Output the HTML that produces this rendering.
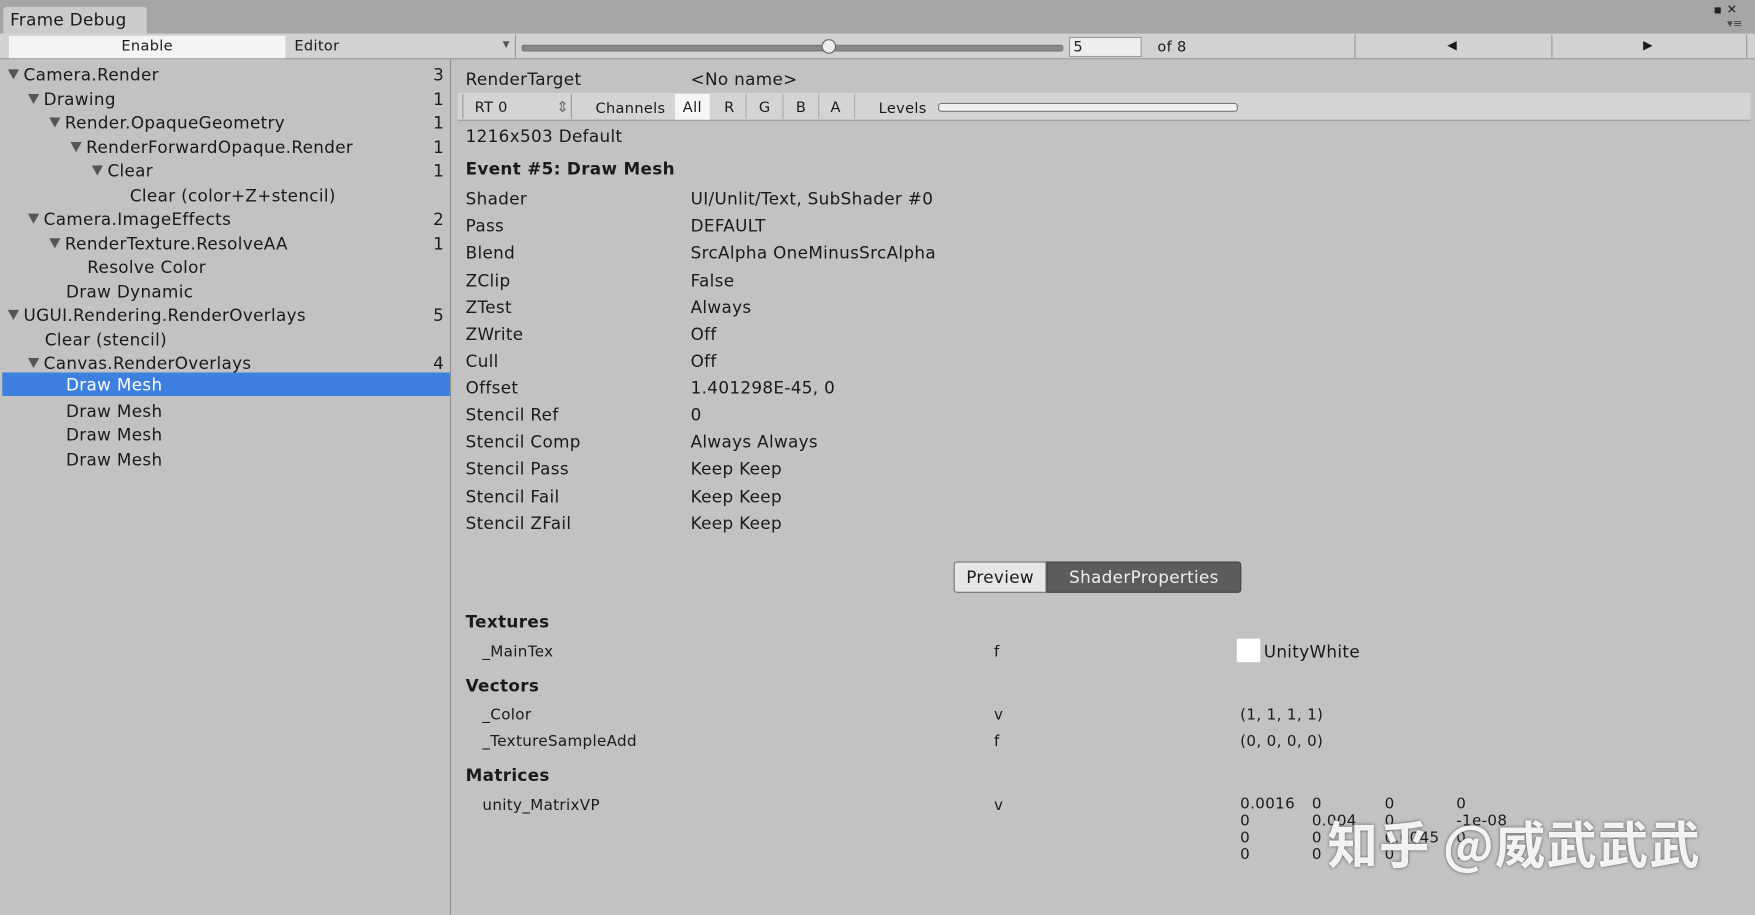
<!DOCTYPE html>
<html><head><meta charset="utf-8"><style>
html,body{margin:0;padding:0;width:1755px;height:915px;overflow:hidden;background:#c2c2c2}
#s{position:absolute;left:0;top:0;width:1568px;height:818px;transform:scale(1.1193,1.1186);transform-origin:0 0;background:#c2c2c2;font-family:"DejaVu Sans","Liberation Sans",sans-serif;font-size:15px;letter-spacing:0.3px;color:#1a1a1a}
.a{position:absolute;white-space:nowrap}
.t{position:absolute;white-space:nowrap;line-height:21px;height:21px;margin-top:2px}
.tri{display:inline-block;width:0;height:0;border-left:5px solid transparent;border-right:5px solid transparent;border-top:9px solid #555;margin-right:4px;vertical-align:1px}
.sm{font-size:13.5px}
</style></head><body><div id="s">
<div class="a" style="left:0;top:0;width:1568px;height:30px;background:#a5a5a5"></div>
<div class="a" style="left:3px;top:6px;width:128px;height:24px;background:#cbcbcb;border-radius:3px 3px 0 0;font-size:15px;line-height:24px;padding-left:6px;box-sizing:border-box">Frame Debug</div>
<div class="a" style="left:1531px;top:2px;font-size:11px;color:#222">▪ ✕</div>
<div class="a" style="left:1543px;top:16px;font-size:10px;color:#444">▾≡</div>
<div class="a" style="left:0;top:30px;width:1568px;height:22px;background:#d2d2d2;border-bottom:1px solid #999"></div>
<div class="a" style="left:8px;top:31px;width:247px;height:20px;background:#f4f4f4;text-align:center;font-size:13px;line-height:20px;margin-top:1px">Enable</div>
<div class="a" style="left:263px;top:32px;font-size:13px;line-height:20px">Editor</div>
<div class="a" style="left:449px;top:31px;font-size:8px;line-height:18px;color:#555">▼</div>
<div class="a" style="left:460px;top:31px;width:1px;height:21px;background:#999"></div>
<div class="a" style="left:466px;top:40px;width:482px;height:4px;background:#888;border-radius:2px;border:1px solid #777"></div>
<div class="a" style="left:734px;top:35px;width:11px;height:11px;border-radius:50%;background:#eee;border:1px solid #666"></div>
<div class="a" style="left:955px;top:32px;width:65px;height:18px;background:#eee;border:1px solid #999;font-size:13px;line-height:18px;padding-left:3px;box-sizing:border-box;margin-top:1px">5</div>
<div class="a" style="left:1034px;top:33px;font-size:13px;line-height:20px">of 8</div>
<div class="a" style="left:1210px;top:31px;width:1px;height:21px;background:#999"></div>
<div class="a" style="left:1386px;top:31px;width:1px;height:21px;background:#999"></div>
<div class="a" style="left:1560px;top:31px;width:1px;height:21px;background:#999"></div>
<div class="a" style="left:1293px;top:34px;font-size:11px">◀</div>
<div class="a" style="left:1468px;top:34px;font-size:11px">▶</div>
<div class="a" style="left:402px;top:53px;width:1px;height:765px;background:#8f8f8f"></div>
<div class="a" style="left:2px;top:333px;width:400px;height:21px;background:#3d80df"></div>
<div class="t" style="left:7px;top:55px"><span class="tri"></span>Camera.Render</div>
<div class="t" style="left:25px;top:77px"><span class="tri"></span>Drawing</div>
<div class="t" style="left:44px;top:98px"><span class="tri"></span>Render.OpaqueGeometry</div>
<div class="t" style="left:63px;top:120px"><span class="tri"></span>RenderForwardOpaque.Render</div>
<div class="t" style="left:82px;top:141px"><span class="tri"></span>Clear</div>
<div class="t" style="left:116px;top:163px">Clear (color+Z+stencil)</div>
<div class="t" style="left:25px;top:184px"><span class="tri"></span>Camera.ImageEffects</div>
<div class="t" style="left:44px;top:206px"><span class="tri"></span>RenderTexture.ResolveAA</div>
<div class="t" style="left:78px;top:227px">Resolve Color</div>
<div class="t" style="left:59px;top:249px">Draw Dynamic</div>
<div class="t" style="left:7px;top:270px"><span class="tri"></span>UGUI.Rendering.RenderOverlays</div>
<div class="t" style="left:40px;top:292px">Clear (stencil)</div>
<div class="t" style="left:25px;top:313px"><span class="tri"></span>Canvas.RenderOverlays</div>
<div class="t" style="left:59px;top:332px;color:#fff">Draw Mesh</div>
<div class="t" style="left:59px;top:356px">Draw Mesh</div>
<div class="t" style="left:59px;top:377px">Draw Mesh</div>
<div class="t" style="left:59px;top:399px">Draw Mesh</div>
<div class="t" style="left:387px;top:55px">3</div>
<div class="t" style="left:387px;top:77px">1</div>
<div class="t" style="left:387px;top:98px">1</div>
<div class="t" style="left:387px;top:120px">1</div>
<div class="t" style="left:387px;top:141px">1</div>
<div class="t" style="left:387px;top:184px">2</div>
<div class="t" style="left:387px;top:206px">1</div>
<div class="t" style="left:387px;top:270px">5</div>
<div class="t" style="left:387px;top:313px">4</div>
<div class="t" style="left:416px;top:59px">RenderTarget</div>
<div class="t" style="left:617px;top:59px">&lt;No name&gt;</div>
<div class="a" style="left:409px;top:83px;width:1155px;height:24px;background:#d4d4d4;border-bottom:1px solid #999"></div>
<div class="a" style="left:413px;top:84px;width:1px;height:22px;background:#999"></div>
<div class="t sm" style="left:424px;top:84px;font-size:13px">RT 0</div>
<div class="t sm" style="left:497px;top:84px;color:#666">⇕</div>
<div class="a" style="left:510px;top:84px;width:1px;height:22px;background:#999"></div>
<div class="t sm" style="left:532px;top:85px;font-size:13px">Channels</div>
<div class="a" style="left:603px;top:84px;width:31px;height:23px;background:#f6f6f6"></div>
<div class="t sm" style="left:610px;top:84px;font-size:13px">All</div>
<div class="t sm" style="left:647px;top:84px;font-size:13px">R</div>
<div class="t sm" style="left:678px;top:84px;font-size:13px">G</div>
<div class="t sm" style="left:711px;top:84px;font-size:13px">B</div>
<div class="t sm" style="left:742px;top:84px;font-size:13px">A</div>
<div class="a" style="left:666px;top:84px;width:1px;height:22px;background:#aaa"></div>
<div class="a" style="left:699px;top:84px;width:1px;height:22px;background:#aaa"></div>
<div class="a" style="left:731px;top:84px;width:1px;height:22px;background:#aaa"></div>
<div class="a" style="left:763px;top:84px;width:1px;height:22px;background:#aaa"></div>
<div class="t sm" style="left:785px;top:85px;font-size:13px">Levels</div>
<div class="a" style="left:838px;top:92px;width:266px;height:6px;background:#eee;border:1px solid #777;border-radius:3px"></div>
<div class="t" style="left:416px;top:110px">1216x503 Default</div>
<div class="t" style="left:416px;top:139px;font-weight:bold">Event #5: Draw Mesh</div>
<div class="t" style="left:416px;top:166px">Shader</div><div class="t" style="left:617px;top:166px">UI/Unlit/Text, SubShader #0</div>
<div class="t" style="left:416px;top:190px">Pass</div><div class="t" style="left:617px;top:190px">DEFAULT</div>
<div class="t" style="left:416px;top:214px">Blend</div><div class="t" style="left:617px;top:214px">SrcAlpha OneMinusSrcAlpha</div>
<div class="t" style="left:416px;top:239px">ZClip</div><div class="t" style="left:617px;top:239px">False</div>
<div class="t" style="left:416px;top:263px">ZTest</div><div class="t" style="left:617px;top:263px">Always</div>
<div class="t" style="left:416px;top:287px">ZWrite</div><div class="t" style="left:617px;top:287px">Off</div>
<div class="t" style="left:416px;top:311px">Cull</div><div class="t" style="left:617px;top:311px">Off</div>
<div class="t" style="left:416px;top:335px">Offset</div><div class="t" style="left:617px;top:335px">1.401298E-45, 0</div>
<div class="t" style="left:416px;top:359px">Stencil Ref</div><div class="t" style="left:617px;top:359px">0</div>
<div class="t" style="left:416px;top:383px">Stencil Comp</div><div class="t" style="left:617px;top:383px">Always Always</div>
<div class="t" style="left:416px;top:407px">Stencil Pass</div><div class="t" style="left:617px;top:407px">Keep Keep</div>
<div class="t" style="left:416px;top:432px">Stencil Fail</div><div class="t" style="left:617px;top:432px">Keep Keep</div>
<div class="t" style="left:416px;top:456px">Stencil ZFail</div><div class="t" style="left:617px;top:456px">Keep Keep</div>
<div class="a" style="left:852px;top:502px;width:83px;height:28px;background:#e6e6e6;border:1px solid #777;border-radius:3px 0 0 3px;box-sizing:border-box;font-size:15px;line-height:26px;text-align:center">Preview</div>
<div class="a" style="left:935px;top:502px;width:174px;height:28px;background:#5c5c5c;border:1px solid #444;border-radius:0 3px 3px 0;box-sizing:border-box;font-size:15px;line-height:26px;text-align:center;color:#eee">ShaderProperties</div>
<div class="t" style="left:416px;top:544px;font-weight:bold">Textures</div>
<div class="t sm" style="left:431px;top:571px">_MainTex</div>
<div class="t sm" style="left:888px;top:571px">f</div>
<div class="a" style="left:1105px;top:571px;width:21px;height:21px;background:#fff"></div>
<div class="t" style="left:1129px;top:571px">UnityWhite</div>
<div class="t" style="left:416px;top:601px;font-weight:bold">Vectors</div>
<div class="t sm" style="left:431px;top:627px">_Color</div><div class="t sm" style="left:888px;top:627px">v</div><div class="t sm" style="left:1108px;top:627px">(1, 1, 1, 1)</div>
<div class="t sm" style="left:431px;top:651px">_TextureSampleAdd</div><div class="t sm" style="left:888px;top:651px">f</div><div class="t sm" style="left:1108px;top:651px">(0, 0, 0, 0)</div>
<div class="t" style="left:416px;top:681px;font-weight:bold">Matrices</div>
<div class="t sm" style="left:431px;top:708px">unity_MatrixVP</div><div class="t sm" style="left:888px;top:708px">v</div>
<div class="a sm" style="left:1108px;top:712px;line-height:15px">0.0016<br>0<br>0<br>0</div>
<div class="a sm" style="left:1172px;top:712px;line-height:15px">0<br>0.004<br>0<br>0</div>
<div class="a sm" style="left:1237px;top:712px;line-height:15px">0<br>0<br>0.0045<br>0</div>
<div class="a sm" style="left:1301px;top:712px;line-height:15px">0<br>-1e-08<br>0<br>1</div>
<div class="a" style="left:1186px;top:720px;font-family:'Noto Sans CJK SC',sans-serif;font-size:45px;letter-spacing:1px;font-weight:bold;color:rgba(255,255,255,0.92);text-shadow:0 0 3px #555">知乎 @威武武武</div>
</div></body></html>
